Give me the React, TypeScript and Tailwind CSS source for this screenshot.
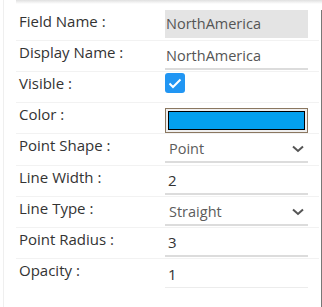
import React from "react";

type Row = {
  label: string;
  kind: "readonly" | "text" | "check" | "color" | "select" | "number";
  value?: string;
  h: string;
  last?: boolean;
};

const rows: Row[] = [
  { label: "Field Name :", kind: "readonly", value: "NorthAmerica", h: "h-[31px]" },
  { label: "Display Name :", kind: "text", value: "NorthAmerica", h: "h-[31px]" },
  { label: "Visible :", kind: "check", h: "h-[31px]" },
  { label: "Color :", kind: "color", h: "h-[31px]" },
  { label: "Point Shape :", kind: "select", value: "Point", h: "h-[32px]" },
  { label: "Line Width :", kind: "number", value: "2", h: "h-[31px]" },
  { label: "Line Type :", kind: "select", value: "Straight", h: "h-[31px]" },
  { label: "Point Radius :", kind: "number", value: "3", h: "h-[31px]" },
  { label: "Opacity :", kind: "number", value: "1", h: "h-[31px]", last: true },
];

function Chevron() {
  return (
    <svg width="12" height="8" viewBox="0 0 12 8" fill="none">
      <polyline points="1,1.5 6,6 11,1.5" stroke="#555" strokeWidth="2" />
    </svg>
  );
}

function Value({ row }: { row: Row }) {
  switch (row.kind) {
    case "readonly":
      return (
        <div className="flex h-[28px] w-[143px] items-center bg-[#e4e4e4] pl-px text-[14.5px] text-[#555]">
          {row.value}
        </div>
      );
    case "text":
      return (
        <div className="flex h-[29px] w-[143px] items-center border-b-2 border-[#dcdcdc] pl-px pt-[2px] text-[14.5px] text-[#555]">
          {row.value}
        </div>
      );
    case "check":
      return (
        <div className="mt-px flex h-[20px] w-[20px] items-center justify-center rounded-[3px] bg-[#2196f3]">
          <svg width="14" height="11" viewBox="0 0 14 11" fill="none">
            <polyline points="1.5,5.5 5,9 12.5,1.5" stroke="white" strokeWidth="2" />
          </svg>
        </div>
      );
    case "color":
      return (
        <div className="mt-[5px] h-[25px] w-[143px] border border-[#8b7760] bg-[#efefef] p-[2px]">
          <div className="h-full w-full border border-black bg-[#03a0ef]" />
        </div>
      );
    case "select":
      return (
        <div className="flex h-[29px] w-[143px] items-center justify-between border-b-2 border-[#dcdcdc] pl-[4px] pr-[4px] pt-[2px] text-[14.5px] text-[#5c5c5c]">
          <span>{row.value}</span>
          <Chevron />
        </div>
      );
    default:
      return (
        <div
          className={
            row.last
              ? "flex h-[29px] w-[143px] items-center border-b border-[#ececec] pl-[3px] pt-[2px] text-[#333]"
              : "flex h-[29px] w-[143px] items-center border-b-2 border-[#dcdcdc] pl-[3px] pt-[2px] text-[#333]"
          }
        >
          {row.value}
        </div>
      );
  }
}

export default function App() {
  return (
    <div className="flex h-[307px] w-[322px] overflow-hidden bg-white font-['Open_Sans',sans-serif] text-[15px]">
      <div className="w-[3px] shrink-0" />
      <div className="flex flex-1 flex-col border-l border-[#efefef]">
        <div className="ml-[12px] h-[4px] shrink-0 bg-gradient-to-b from-[#e0e0e0] to-white" />
        <div className="mt-[6px] flex-1 border-r border-[#777] pl-[12px] pr-[2px]">
          {rows.map((row) => (
            <div
              key={row.label}
              className={
                row.last
                  ? `grid grid-cols-[145px_1fr] ${row.h}`
                  : `grid grid-cols-[145px_1fr] border-b border-[#f2f2f2] ${row.h}`
              }
            >
              <div className="pl-[3px] pt-px leading-5 text-[#333]">{row.label}</div>
              <div className="pl-[4px]">
                <Value row={row} />
              </div>
            </div>
          ))}
        </div>
      </div>
    </div>
  );
}
